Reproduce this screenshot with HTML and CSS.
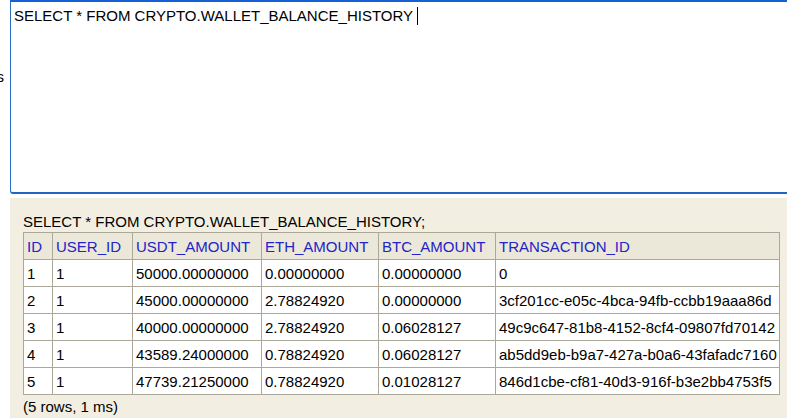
FILE: index.html
```html
<!DOCTYPE html>
<html>
<head>
<meta charset="utf-8">
<link rel="stylesheet" href="styles.css">
</head>
<body>
<div class="page">
  <div class="editor-row">
    <div class="label"><span>s</span></div>
    <div class="editor">SELECT * FROM CRYPTO.WALLET_BALANCE_HISTORY <span class="caret"></span></div>
  </div>
  <div class="result">
    <div class="sql">SELECT * FROM CRYPTO.WALLET_BALANCE_HISTORY;</div>
    <table class="grid">
      <colgroup>
        <col class="c-id"><col class="c-user"><col class="c-usdt"><col class="c-eth"><col class="c-btc"><col class="c-tx">
      </colgroup>
      <thead>
        <tr><th>ID</th><th>USER_ID</th><th>USDT_AMOUNT</th><th>ETH_AMOUNT</th><th>BTC_AMOUNT</th><th>TRANSACTION_ID</th></tr>
      </thead>
      <tbody>
        <tr><td>1</td><td>1</td><td>50000.00000000</td><td>0.00000000</td><td>0.00000000</td><td>0</td></tr>
        <tr><td>2</td><td>1</td><td>45000.00000000</td><td>2.78824920</td><td>0.00000000</td><td>3cf201cc-e05c-4bca-94fb-ccbb19aaa86d</td></tr>
        <tr><td>3</td><td>1</td><td>40000.00000000</td><td>2.78824920</td><td>0.06028127</td><td>49c9c647-81b8-4152-8cf4-09807fd70142</td></tr>
        <tr><td>4</td><td>1</td><td>43589.24000000</td><td>0.78824920</td><td>0.06028127</td><td>ab5dd9eb-b9a7-427a-b0a6-43fafadc7160</td></tr>
        <tr><td>5</td><td>1</td><td>47739.21250000</td><td>0.78824920</td><td>0.01028127</td><td>846d1cbe-cf81-40d3-916f-b3e2bb4753f5</td></tr>
      </tbody>
    </table>
    <div class="foot">(5 rows, 1 ms)</div>
  </div>
</div>
</body>
</html>
```
FILE: styles.css
```css
html, body {
  margin: 0;
  padding: 0;
  background: #ffffff;
}
body {
  font-family: "Liberation Sans", Arial, sans-serif;
  font-size: 15px;
  line-height: 18px;
  color: #000;
  overflow: hidden;
  width: 787px;
  height: 418px;
}
.page {
  display: flex;
  flex-direction: column;
}
.editor-row {
  display: flex;
  height: 194px;
}
.label {
  width: 10px;
  flex: none;
  overflow: hidden;
  display: flex;
  justify-content: flex-end;
  align-items: flex-start;
  padding-top: 68px;
  box-sizing: border-box;
}
.label span {
  flex: none;
  white-space: nowrap;
  margin-right: 6px;
}
.editor {
  flex: 1;
  box-sizing: border-box;
  border-top: 2px solid #1560d4;
  border-bottom: 2px solid #2164c2;
  border-left: 1px solid #2b6cc4;
  border-bottom-left-radius: 3px;
  padding: 5px 0 0 3px;
  white-space: nowrap;
}
.caret {
  display: inline-block;
  width: 1px;
  height: 18px;
  background: #000;
  vertical-align: -4px;
}
.result {
  margin: 4px 0 0 10px;
  background: #f2efe2;
  padding: 15px 0 6px 13px;
  height: 220px;
  box-sizing: border-box;
}
.sql {
  margin-bottom: 1px;
}
.grid {
  border-collapse: collapse;
  table-layout: fixed;
  width: 756px;
}
.c-id { width: 29px; }
.c-user { width: 80px; }
.c-usdt { width: 129px; }
.c-eth { width: 117px; }
.c-btc { width: 117px; }
.c-tx { width: 284px; }
.grid th, .grid td {
  border: 1px solid #aca899;
  padding: 5px 3px 3px 3px;
  text-align: left;
  font-weight: normal;
  white-space: nowrap;
  overflow: hidden;
  height: 18px;
}
.grid th {
  background: #ebe8d9;
  color: #2323c8;
}
.grid td {
  background: #ffffff;
}
.foot {
  margin-top: 3px;
}
```
